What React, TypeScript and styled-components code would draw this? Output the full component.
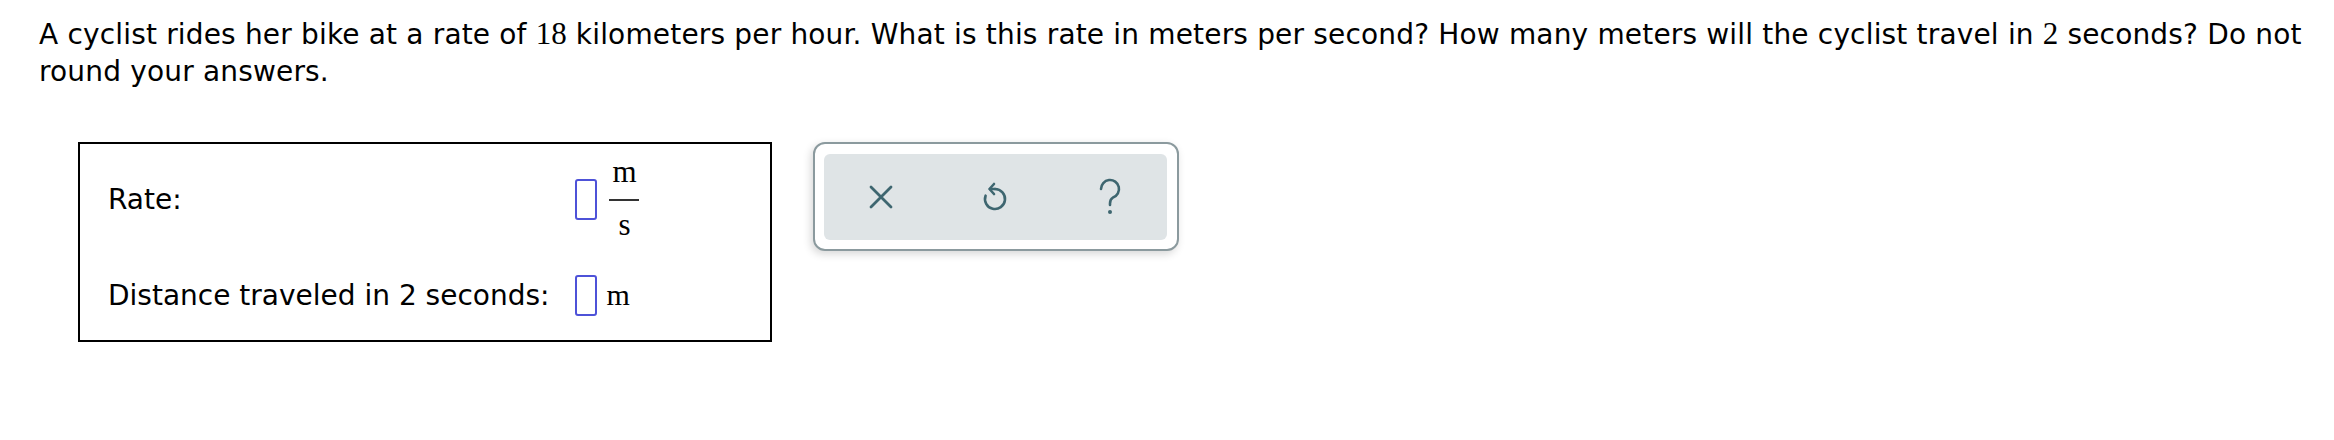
import styled, { createGlobalStyle } from "styled-components";

const GlobalStyle = createGlobalStyle`
  body {
    margin: 0;
    background: #ffffff;
    font-family: "DejaVu Sans", Verdana, sans-serif;
    color: #000000;
  }
`;

const Page = styled.div`
  padding: 15px 20px 0 39px;
`;

const Question = styled.p`
  margin: 0;
  font-size: 28px;
  line-height: 37px;
  letter-spacing: 0.17px;
`;

const Num = styled.span`
  font-family: "Liberation Serif", "Times New Roman", serif;
  font-size: 31px;
  letter-spacing: 0;
`;

const AnswerArea = styled.div`
  display: flex;
  align-items: flex-start;
  gap: 41px;
  margin: 52px 0 0 39px;
`;

const AnswerBox = styled.div`
  box-sizing: border-box;
  width: 694px;
  height: 200px;
  border: 2px solid #000;
  padding: 7px 28px 0;
  display: grid;
  grid-template-columns: auto 1fr;
  grid-template-rows: 96px 96px;
  column-gap: 26px;
  align-items: center;
`;

const Label = styled.div`
  font-size: 28px;
  line-height: 37px;
`;

const Field = styled.div`
  display: flex;
  align-items: center;
`;

const Blank = styled.div`
  box-sizing: border-box;
  width: 22px;
  height: 41px;
  border: 2px solid #4e52d8;
  border-radius: 3px;
  background: #fff;
`;

const Unit = styled.span`
  font-family: "Liberation Serif", "Times New Roman", serif;
  font-size: 30px;
  line-height: 28px;
  margin-left: 9px;
`;

const Fraction = styled.div`
  display: flex;
  flex-direction: column;
  align-items: center;
  margin: 0 0 2px 12px;
  font-family: "Liberation Serif", "Times New Roman", serif;
  font-size: 31px;
  line-height: 28px;
`;

const Bar = styled.div`
  width: 30px;
  height: 2px;
  background: #333;
  margin: 13px 0 10px;
`;

const Toolbar = styled.div`
  box-sizing: border-box;
  width: 366px;
  height: 109px;
  border: 2px solid #8b9a9e;
  border-radius: 12px;
  background: #fff;
  padding: 10px 10px 9px 9px;
  box-shadow: -2px 3px 8px rgba(0, 0, 0, 0.16);
`;

const ToolInner = styled.div`
  height: 100%;
  background: #dfe4e6;
  border-radius: 6px;
  display: grid;
  grid-template-columns: repeat(3, 1fr);
  align-items: center;
  justify-items: center;
`;

const ToolButton = styled.button`
  border: none;
  background: none;
  padding: 0;
  width: 40px;
  height: 40px;
  display: flex;
  align-items: center;
  justify-content: center;
  cursor: pointer;
  color: #3e6670;
`;

function CloseIcon() {
  return (
    <svg width="26" height="26" viewBox="0 0 26 26" fill="none">
      <path d="M3 3 L23 23 M23 3 L3 23" stroke="currentColor" strokeWidth="2.8" strokeLinecap="round" />
    </svg>
  );
}

function UndoIcon() {
  return (
    <svg width="30" height="34" viewBox="0 0 30 34" fill="none">
      <path
        d="M15 9 A10 10 0 1 1 5.6 15.6"
        stroke="currentColor"
        strokeWidth="2.6"
        strokeLinecap="round"
      />
      <path d="M15 9 H10" stroke="currentColor" strokeWidth="2.6" strokeLinecap="round" />
      <path
        d="M14 4 L9.5 9 L14 14"
        stroke="currentColor"
        strokeWidth="2.6"
        strokeLinecap="round"
        strokeLinejoin="round"
      />
    </svg>
  );
}

function HelpIcon() {
  return (
    <svg width="26" height="38" viewBox="0 0 26 38" fill="none">
      <path
        d="M4 11 A9 9 0 1 1 16 19.5 C13.5 21 13 23 13 25.5 V27"
        stroke="currentColor"
        strokeWidth="2.6"
        strokeLinecap="round"
      />
      <circle cx="13" cy="34" r="2" fill="currentColor" />
    </svg>
  );
}

export default function App() {
  return (
    <>
      <GlobalStyle />
      <Page>
        <Question>
          A cyclist rides her bike at a rate of <Num>18</Num> kilometers per hour. What is this
          rate in meters per second? How many meters will the cyclist travel in <Num>2</Num>{" "}
          seconds? Do not round your answers.
        </Question>
        <AnswerArea>
          <AnswerBox>
            <Label>Rate:</Label>
            <Field>
              <Blank />
              <Fraction>
                <span>m</span>
                <Bar />
                <span>s</span>
              </Fraction>
            </Field>
            <Label>Distance traveled in 2 seconds:</Label>
            <Field>
              <Blank />
              <Unit>m</Unit>
            </Field>
          </AnswerBox>
          <Toolbar>
            <ToolInner>
              <ToolButton aria-label="Clear">
                <CloseIcon />
              </ToolButton>
              <ToolButton aria-label="Undo">
                <UndoIcon />
              </ToolButton>
              <ToolButton aria-label="Help">
                <HelpIcon />
              </ToolButton>
            </ToolInner>
          </Toolbar>
        </AnswerArea>
      </Page>
    </>
  );
}
